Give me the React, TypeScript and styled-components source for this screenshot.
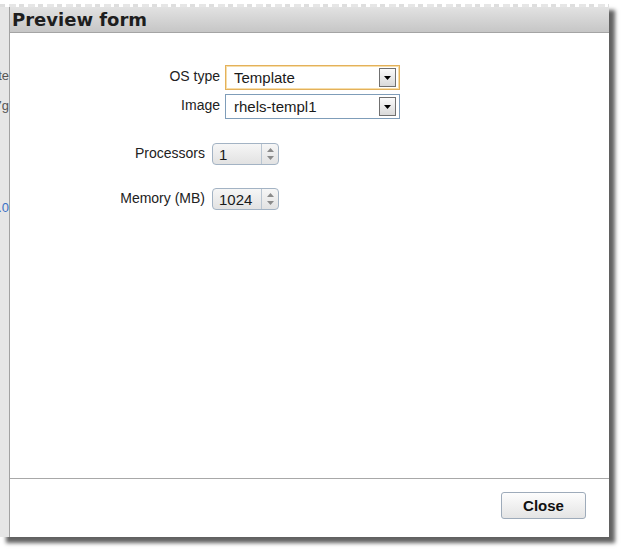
import React from "react";
import styled, { createGlobalStyle } from "styled-components";

const Global = createGlobalStyle`
  html, body { margin: 0; padding: 0; background: #ffffff; }
  body { font-family: "Liberation Sans", Arial, sans-serif; }
`;

const Canvas = styled.div`
  width: 630px;
  height: 556px;
  overflow: hidden;
  background: #ffffff;
  padding-top: 4px;
  box-sizing: border-box;
`;

const Sheet = styled.div`
  position: relative;
  width: 609px;
  height: 533px;
  display: flex;
  flex-direction: column;
  background: #ffffff;
  box-shadow: 6px 6px 4px rgba(0, 0, 0, 0.62);
`;

const TopEdge = styled.div`
  height: 3px;
  flex: none;
  background: repeating-linear-gradient(
    90deg,
    #d6d6d6 0 5px,
    #ffffff 5px 9px,
    #e0e0e0 9px 16px,
    #ffffff 16px 19px
  );
  opacity: 0.8;
`;

const Body = styled.div`
  flex: 1;
  display: flex;
  min-height: 0;
`;

const Strip = styled.div`
  width: 9px;
  flex: none;
  background: #e6e6e6;
  display: flex;
  flex-direction: column;
  overflow: hidden;
`;

const Fragment = styled.div<{ $top: number; $color: string }>`
  margin-top: ${(p) => p.$top}px;
  height: 14px;
  display: flex;
  justify-content: flex-end;
  white-space: nowrap;
  font-size: 13px;
  line-height: 14px;
  color: ${(p) => p.$color};
`;

const Dialog = styled.div`
  flex: 1;
  display: flex;
  flex-direction: column;
  border-left: 1px solid #a2a2a2;
  background: #ffffff;
`;

const TitleBar = styled.div`
  height: 25px;
  flex: none;
  display: flex;
  align-items: center;
  padding-left: 2px;
  background: linear-gradient(#e2e2e2, #c6c6c6);
  border-bottom: 1px solid #a4a4a4;
`;

const Title = styled.h1`
  margin: 0;
  font-family: "DejaVu Sans", Verdana, sans-serif;
  font-weight: bold;
  font-size: 18px;
  color: #1e1e1e;
  line-height: 25px;
`;

const Content = styled.div`
  flex: 1;
  display: flex;
  flex-direction: column;
  padding-top: 32px;
`;

const Group = styled.div<{ $gap: number }>`
  display: flex;
  flex-direction: column;
  gap: ${(p) => p.$gap}px;
`;

const Row = styled.div<{ $labelWidth: number; $gap: number }>`
  display: grid;
  grid-template-columns: ${(p) => p.$labelWidth}px auto;
  column-gap: ${(p) => p.$gap}px;
  align-items: center;
`;

const Label = styled.label`
  text-align: right;
  font-size: 14px;
  color: #222222;
  line-height: 16px;
  margin-top: -3px;
`;

const Select = styled.div<{ $focused?: boolean }>`
  width: 175px;
  height: 25px;
  box-sizing: border-box;
  display: flex;
  align-items: center;
  justify-content: space-between;
  padding: 0 3px 0 8px;
  background: #ffffff;
  border: 1px solid ${(p) => (p.$focused ? "#e4b15a" : "#7f9db9")};
  box-shadow: ${(p) => (p.$focused ? "inset 0 0 0 1px #f6deab" : "none")};
  font-size: 15px;
  color: #1a1a1a;
`;

const DropButton = styled.div`
  width: 17px;
  height: 19px;
  box-sizing: border-box;
  border: 1px solid #707070;
  background: linear-gradient(#fbfbfb, #d9d9d9);
  display: flex;
  align-items: center;
  justify-content: center;
`;

const Spinner = styled.div`
  width: 67px;
  height: 22px;
  box-sizing: border-box;
  border: 1px solid #a3b3c4;
  border-radius: 4px;
  background: linear-gradient(#f6f6f6, #e2e2e2);
  display: flex;
  align-items: stretch;
`;

const SpinValue = styled.div`
  flex: 1;
  display: flex;
  align-items: center;
  padding-left: 6px;
  font-size: 15px;
  color: #1a1a1a;
`;

const SpinButtons = styled.div`
  width: 16px;
  border-left: 1px solid #b9c5d1;
  display: flex;
  flex-direction: column;
  align-items: center;
  justify-content: center;
  gap: 4px;
`;

const Spacer = styled.div<{ $h: number }>`
  height: ${(p) => p.$h}px;
  flex: none;
`;

const Footer = styled.div`
  height: 59px;
  flex: none;
  border-top: 1px solid #a8a8a8;
  display: flex;
  justify-content: flex-end;
  align-items: flex-start;
  padding: 13px 23px 0 0;
  box-sizing: border-box;
`;

const CloseButton = styled.button`
  width: 85px;
  height: 27px;
  border: 1px solid #9eabba;
  border-radius: 3px;
  background: linear-gradient(#fdfdfd, #e4e4e4);
  font-family: "Liberation Sans", Arial, sans-serif;
  font-weight: bold;
  font-size: 15px;
  color: #111111;
  padding: 0;
  cursor: pointer;
`;

const Caret = () => (
  <svg width="7" height="4" viewBox="0 0 7 4">
    <path d="M0 0 H7 L3.5 4 Z" fill="#000" />
  </svg>
);

const Arrow = ({ up }: { up?: boolean }) => (
  <svg width="7" height="4" viewBox="0 0 7 4">
    <path d={up ? "M0 4 H7 L3.5 0 Z" : "M0 0 H7 L3.5 4 Z"} fill="#8a8a8a" />
  </svg>
);

export default function App() {
  return (
    <>
      <Global />
      <Canvas>
        <Sheet>
          <TopEdge />
          <Body>
            <Strip>
              <Fragment $top={62} $color="#555">Template</Fragment>
              <Fragment $top={16} $color="#555">rhel5-7g</Fragment>
              <Fragment $top={88} $color="#3a6fc4">1.0</Fragment>
            </Strip>
            <Dialog>
              <TitleBar>
                <Title>Preview form</Title>
              </TitleBar>
              <Content>
                <Group $gap={4}>
                  <Row $labelWidth={210} $gap={5}>
                    <Label>OS type</Label>
                    <Select $focused>
                      Template
                      <DropButton>
                        <Caret />
                      </DropButton>
                    </Select>
                  </Row>
                  <Row $labelWidth={210} $gap={5}>
                    <Label>Image</Label>
                    <Select>
                      rhels-templ1
                      <DropButton>
                        <Caret />
                      </DropButton>
                    </Select>
                  </Row>
                </Group>
                <Spacer $h={24} />
                <Group $gap={23}>
                  <Row $labelWidth={195} $gap={7}>
                    <Label>Processors</Label>
                    <Spinner>
                      <SpinValue>1</SpinValue>
                      <SpinButtons>
                        <Arrow up />
                        <Arrow />
                      </SpinButtons>
                    </Spinner>
                  </Row>
                  <Row $labelWidth={195} $gap={7}>
                    <Label>Memory (MB)</Label>
                    <Spinner>
                      <SpinValue>1024</SpinValue>
                      <SpinButtons>
                        <Arrow up />
                        <Arrow />
                      </SpinButtons>
                    </Spinner>
                  </Row>
                </Group>
              </Content>
              <Footer>
                <CloseButton>Close</CloseButton>
              </Footer>
            </Dialog>
          </Body>
        </Sheet>
      </Canvas>
    </>
  );
}
